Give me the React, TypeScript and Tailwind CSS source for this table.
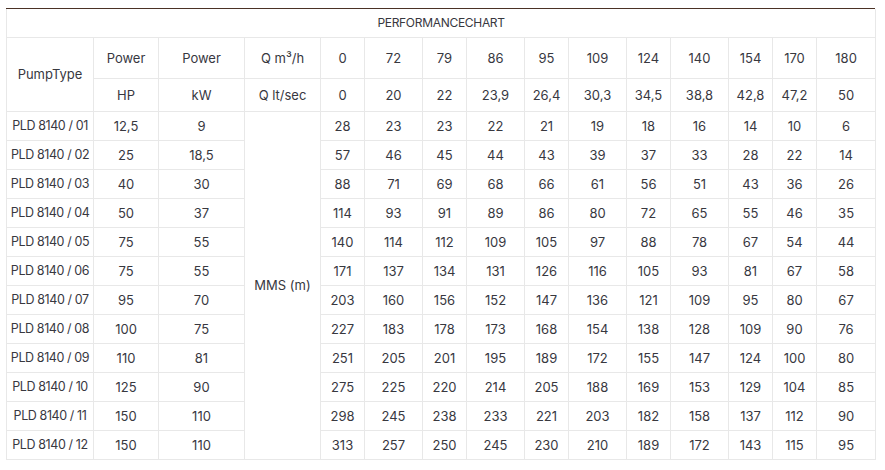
const qm3 = ['0', '72', '79', '86', '95', '109', '124', '140', '154', '170', '180'];
const qls = ['0', '20', '22', '23,9', '26,4', '30,3', '34,5', '38,8', '42,8', '47,2', '50'];

const rows: [string, string, string, number[]][] = [
  ['PLD 8140 / 01', '12,5', '9', [28, 23, 23, 22, 21, 19, 18, 16, 14, 10, 6]],
  ['PLD 8140 / 02', '25', '18,5', [57, 46, 45, 44, 43, 39, 37, 33, 28, 22, 14]],
  ['PLD 8140 / 03', '40', '30', [88, 71, 69, 68, 66, 61, 56, 51, 43, 36, 26]],
  ['PLD 8140 / 04', '50', '37', [114, 93, 91, 89, 86, 80, 72, 65, 55, 46, 35]],
  ['PLD 8140 / 05', '75', '55', [140, 114, 112, 109, 105, 97, 88, 78, 67, 54, 44]],
  ['PLD 8140 / 06', '75', '55', [171, 137, 134, 131, 126, 116, 105, 93, 81, 67, 58]],
  ['PLD 8140 / 07', '95', '70', [203, 160, 156, 152, 147, 136, 121, 109, 95, 80, 67]],
  ['PLD 8140 / 08', '100', '75', [227, 183, 178, 173, 168, 154, 138, 128, 109, 90, 76]],
  ['PLD 8140 / 09', '110', '81', [251, 205, 201, 195, 189, 172, 155, 147, 124, 100, 80]],
  ['PLD 8140 / 10', '125', '90', [275, 225, 220, 214, 205, 188, 169, 153, 129, 104, 85]],
  ['PLD 8140 / 11', '150', '110', [298, 245, 238, 233, 221, 203, 182, 158, 137, 112, 90]],
  ['PLD 8140 / 12', '150', '110', [313, 257, 250, 245, 230, 210, 189, 172, 143, 115, 95]],
];

const widths = [87, 65, 86, 76, 44, 58, 44, 58, 44, 58, 44, 58, 44, 44, 59];

const cell =
  'border border-[#e8e8e8] p-0 text-center align-middle font-normal whitespace-nowrap overflow-hidden';

export default function App() {
  return (
    <div className="bg-white min-h-[470px] pt-2 pl-[6px] text-[13px] leading-4 text-[#38383f] font-['Inter','Open_Sans',sans-serif]">
      <div className="w-[869px] border-t border-[#4b3225]">
        <table className="w-[869px] table-fixed border-collapse">
          <colgroup>
            {widths.map((w, i) => (
              <col key={i} style={{ width: w }} />
            ))}
          </colgroup>
          <tbody>
            <tr className="h-[28px]">
              <th colSpan={15} className={`${cell} border-t-0 uppercase text-[12px] tracking-[-0.3px]`}>
                PerformanceChart
              </th>
            </tr>
            <tr className="h-[41px]">
              <th rowSpan={2} className={cell}>PumpType</th>
              <th className={cell}>Power</th>
              <th className={cell}>Power</th>
              <th className={cell}>Q m³/h</th>
              {qm3.map((v, i) => (
                <th key={i} className={cell}>{v}</th>
              ))}
            </tr>
            <tr className="h-[33px]">
              <th className={cell}>HP</th>
              <th className={cell}>kW</th>
              <th className={cell}>Q lt/sec</th>
              {qls.map((v, i) => (
                <th key={i} className={cell}>{v}</th>
              ))}
            </tr>
            {rows.map(([name, hp, kw, vals], r) => (
              <tr key={name} className="h-[29px]">
                <td className={`${cell} text-[12.5px] tracking-[-0.4px]`}>{name}</td>
                <td className={cell}>{hp}</td>
                <td className={cell}>{kw}</td>
                {r === 0 && (
                  <td rowSpan={12} className={cell}>MMS (m)</td>
                )}
                {vals.map((v, i) => (
                  <td key={i} className={cell}>{v}</td>
                ))}
              </tr>
            ))}
          </tbody>
        </table>
      </div>
    </div>
  );
}
